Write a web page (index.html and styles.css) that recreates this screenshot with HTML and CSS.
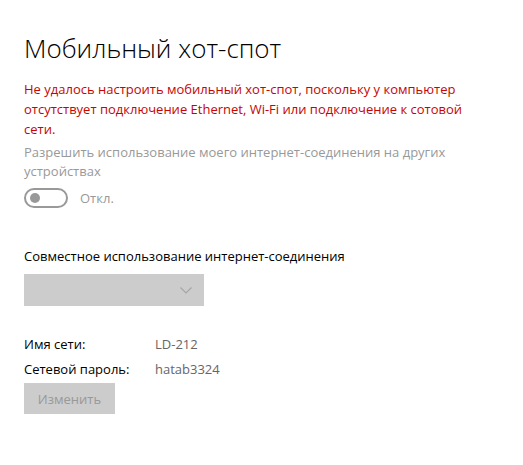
FILE: index.html
```html
<!DOCTYPE html>
<html lang="ru">
<head>
  <meta charset="UTF-8" />
  <title>Мобильный хот-спот</title>
  <link rel="stylesheet" href="styles.css">
</head>
<body>

<div class="page">
  <h1 class="title">Мобильный хот-спот</h1>

  <p class="error">Не удалось настроить мобильный хот-спот, поскольку у компьютер отсутствует подключение Ethernet, Wi-Fi или подключение к сотовой сети.</p>

  <p class="muted share-text">Разрешить использование моего интернет-соединения на других устройствах</p>

  <div class="toggle-row">
    <span class="toggle"><span class="knob"></span></span>
    <span class="muted">Откл.</span>
  </div>

  <p class="label">Совместное использование интернет-соединения</p>
  <div class="select">
    <svg width="12" height="7" viewBox="0 0 12 7"><path d="M0.5 0.5 L6 6 L11.5 0.5" fill="none" stroke="#a6a6a6" stroke-width="1.2"/></svg>
  </div>

  <div class="info">
    <span>Имя сети:</span><span class="value">LD-212</span>
    <span>Сетевой пароль:</span><span class="value">hatab3324</span>
  </div>

  <button class="btn" disabled>Изменить</button>
</div>

</body>
</html>
```

FILE: styles.css
```css
body {
  margin: 0;
  background: #fff;
  font-family: "Open Sans", "Noto Sans", sans-serif;
  font-size: 13px;
  color: #000;
}
.page {
  padding: 28px 24px;
}
.title {
  margin: 0 0 11px;
  font-size: 26px;
  font-weight: 300;
  line-height: 40px;
}
p { margin: 0; }
.error {
  color: #c50500;
  line-height: 20px;
  width: 450px;
}
.muted { color: #999; }
.share-text {
  margin-top: 4px;
  line-height: 19px;
  width: 450px;
}
.toggle-row {
  display: flex;
  align-items: center;
  gap: 12px;
  margin-top: 7px;
}
.toggle {
  width: 36px;
  height: 16px;
  border: 2px solid #999;
  border-radius: 10px;
  display: flex;
  align-items: center;
  padding-left: 4px;
  box-sizing: content-box;
}
.knob {
  width: 10px;
  height: 10px;
  border-radius: 50%;
  background: #999;
}
.label {
  margin-top: 38px;
  line-height: 20px;
}
.select {
  margin-top: 8px;
  width: 180px;
  height: 32px;
  background: #ccc;
  display: flex;
  align-items: center;
  justify-content: flex-end;
  padding-right: 12px;
  box-sizing: border-box;
}
.info {
  margin-top: 28px;
  display: grid;
  grid-template-columns: 131px auto;
  row-gap: 5px;
  line-height: 20px;
}
.value { color: #666; }
.btn {
  margin-top: 4px;
  width: 91px;
  height: 31px;
  border: none;
  background: #ccc;
  color: #999;
  font-family: inherit;
  font-size: 13px;
}
```
